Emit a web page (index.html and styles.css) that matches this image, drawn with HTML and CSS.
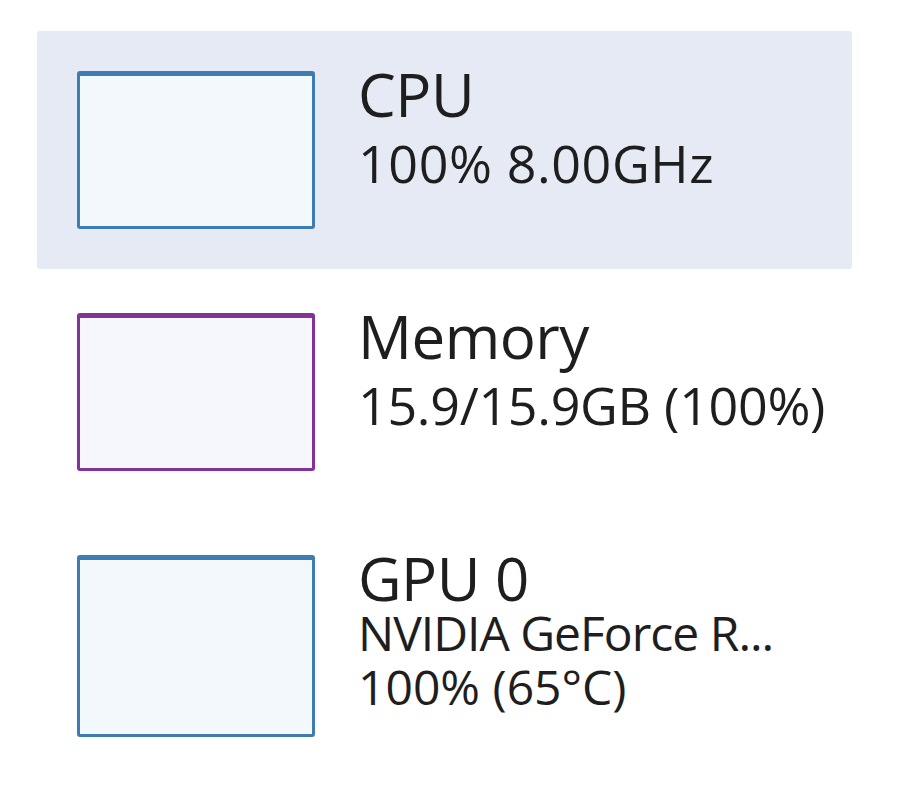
FILE: index.html
```html
<!DOCTYPE html>
<html>
<head>
<meta charset="utf-8">
<link rel="stylesheet" href="styles.css">
</head>
<body>
<div class="list">
  <div class="item selected">
    <div class="graph graph-blue"></div>
    <div class="info">
      <div class="title">CPU</div>
      <div class="sub wide">100% 8.00GHz</div>
    </div>
  </div>
  <div class="item">
    <div class="graph graph-purple"></div>
    <div class="info">
      <div class="title">Memory</div>
      <div class="sub">15.9/15.9GB (100%)</div>
    </div>
  </div>
  <div class="item">
    <div class="graph graph-blue graph-tall"></div>
    <div class="info">
      <div class="title">GPU 0</div>
      <div class="sub-tight first name">NVIDIA GeForce R...</div>
      <div class="sub-tight">100% (65°C)</div>
    </div>
  </div>
</div>
</body>
</html>
```
FILE: styles.css
```css
html, body {
  margin: 0;
  padding: 0;
  background: #ffffff;
}
body {
  font-family: "Open Sans", "Noto Sans", sans-serif;
  color: #1e1e1e;
}
.list {
  display: flex;
  flex-direction: column;
  gap: 4px;
  padding: 31px 0 0 37px;
  width: 815px;
}
.item {
  display: flex;
  align-items: flex-start;
  gap: 43px;
  padding: 40px 0 40px 40px;
  border-radius: 3px;
}
.selected {
  background: #e6eaf4;
}
.graph {
  flex: 0 0 auto;
  width: 238px;
  height: 158px;
  box-sizing: border-box;
  border-radius: 3px;
}
.graph-blue {
  border: 3px solid #3d7db3;
  border-top-width: 5px;
  background: #f3f8fd;
}
.graph-purple {
  border: 3px solid #83329a;
  border-top-width: 5px;
  background: #f6f7fd;
}
.graph-tall {
  height: 182px;
}
.info {
  display: flex;
  flex-direction: column;
  white-space: nowrap;
}
.title {
  font-size: 60px;
  line-height: 66px;
  margin-top: -10px;
  letter-spacing: -0.5px;
}
.sub {
  font-size: 52px;
  line-height: 66px;
  margin-top: 3px;
  letter-spacing: -0.3px;
}
.wide {
  letter-spacing: 0.6px;
}
.sub-tight {
  font-size: 48px;
  line-height: 54px;
}
.first {
  margin-top: -5px;
}
.name {
  letter-spacing: -1px;
}
```
